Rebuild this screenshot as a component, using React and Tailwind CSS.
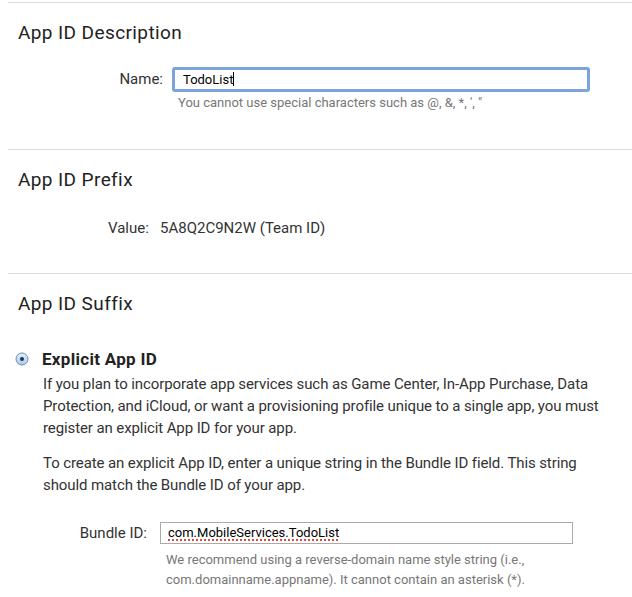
import React from 'react';

const font = { fontFamily: 'Roboto, "Noto Sans", sans-serif' };

function Section({ title, children }) {
  return (
    <section className="ml-2 border-t border-[#dcdcdc] pl-[10px]">
      <h2 className="pt-[18px] text-[19px] leading-[24px] tracking-[0.4px] text-[#222]">{title}</h2>
      {children}
    </section>
  );
}

function RadioOn() {
  return (
    <svg width="14" height="14" viewBox="0 0 14 14" className="shrink-0">
      <defs>
        <linearGradient id="rg" x1="0" y1="0" x2="0" y2="1">
          <stop offset="0" stopColor="#e6f0fb" />
          <stop offset="1" stopColor="#a9c9ee" />
        </linearGradient>
      </defs>
      <circle cx="7" cy="7" r="6" fill="url(#rg)" stroke="#6f8db5" strokeWidth="1" />
      <circle cx="7" cy="7" r="2" fill="#1d3456" />
    </svg>
  );
}

export default function App() {
  return (
    <div className="min-h-[597px] w-[632px] bg-white pt-[2px] text-[#333]" style={font}>
      {/* App ID Description */}
      <Section title="App ID Description">
        <div className="mt-[22px] flex items-center">
          <label className="w-[154px] pr-[9px] text-right text-[15px] text-[#333]">Name:</label>
          <div className="h-[25px] w-[418px] rounded-[3px] border-[3px] border-[#7ba4dc] bg-white px-[8px] text-[13px] leading-[19px] text-black">
            TodoList<span className="inline-block h-[14px] w-px translate-y-[2px] bg-black" />
          </div>
        </div>
        <p className="ml-[160px] mt-[3px] pb-[38px] text-[13px] leading-[16px] text-[#777]">
          You cannot use special characters such as @, &amp;, *, ', "
        </p>
      </Section>

      {/* App ID Prefix */}
      <Section title="App ID Prefix">
        <div className="mt-[25px] flex items-center pb-[34px] text-[15px] leading-[22px]">
          <span className="w-[142px] pl-[90px] text-[#333]">Value:</span>
          <span className="text-[#333]">5A8Q2C9N2W (Team ID)</span>
        </div>
      </Section>

      {/* App ID Suffix */}
      <Section title="App ID Suffix">
        <div className="-ml-[3px] mt-[32px] flex items-center gap-[13px]">
          <RadioOn />
          <span className="text-[17px] font-bold leading-[22px] tracking-[0.3px] text-[#222]">Explicit App ID</span>
        </div>
        <div className="pl-[25px] pr-[20px] text-[15px] leading-[22px] tracking-[-0.1px] text-[#333]">
          <p className="mt-[3px]">
            If you plan to incorporate app services such as Game Center, In-App Purchase, Data Protection, and iCloud, or want a provisioning profile unique to a single app, you must register an explicit App ID for your app.
          </p>
          <p className="mt-[13px]">
            To create an explicit App ID, enter a unique string in the Bundle ID field. This string should match the Bundle ID of your app.
          </p>
          <div className="mt-[26px] flex items-center tracking-normal">
            <label className="w-[117px] pr-[13px] text-right">Bundle ID:</label>
            <div className="h-[22px] w-[413px] border border-[#aaa] bg-white px-[7px] text-[13px] leading-[20px] text-black">
              <span className="underline decoration-[#e04a3f] decoration-dotted decoration-2 underline-offset-2">com.MobileServices.TodoList</span>
            </div>
          </div>
          <p className="ml-[123px] mt-[6px] text-[13px] leading-[20px] tracking-normal text-[#777]">
            We recommend using a reverse-domain name style string (i.e., com.domainname.appname). It cannot contain an asterisk (*).
          </p>
        </div>
      </Section>
    </div>
  );
}
